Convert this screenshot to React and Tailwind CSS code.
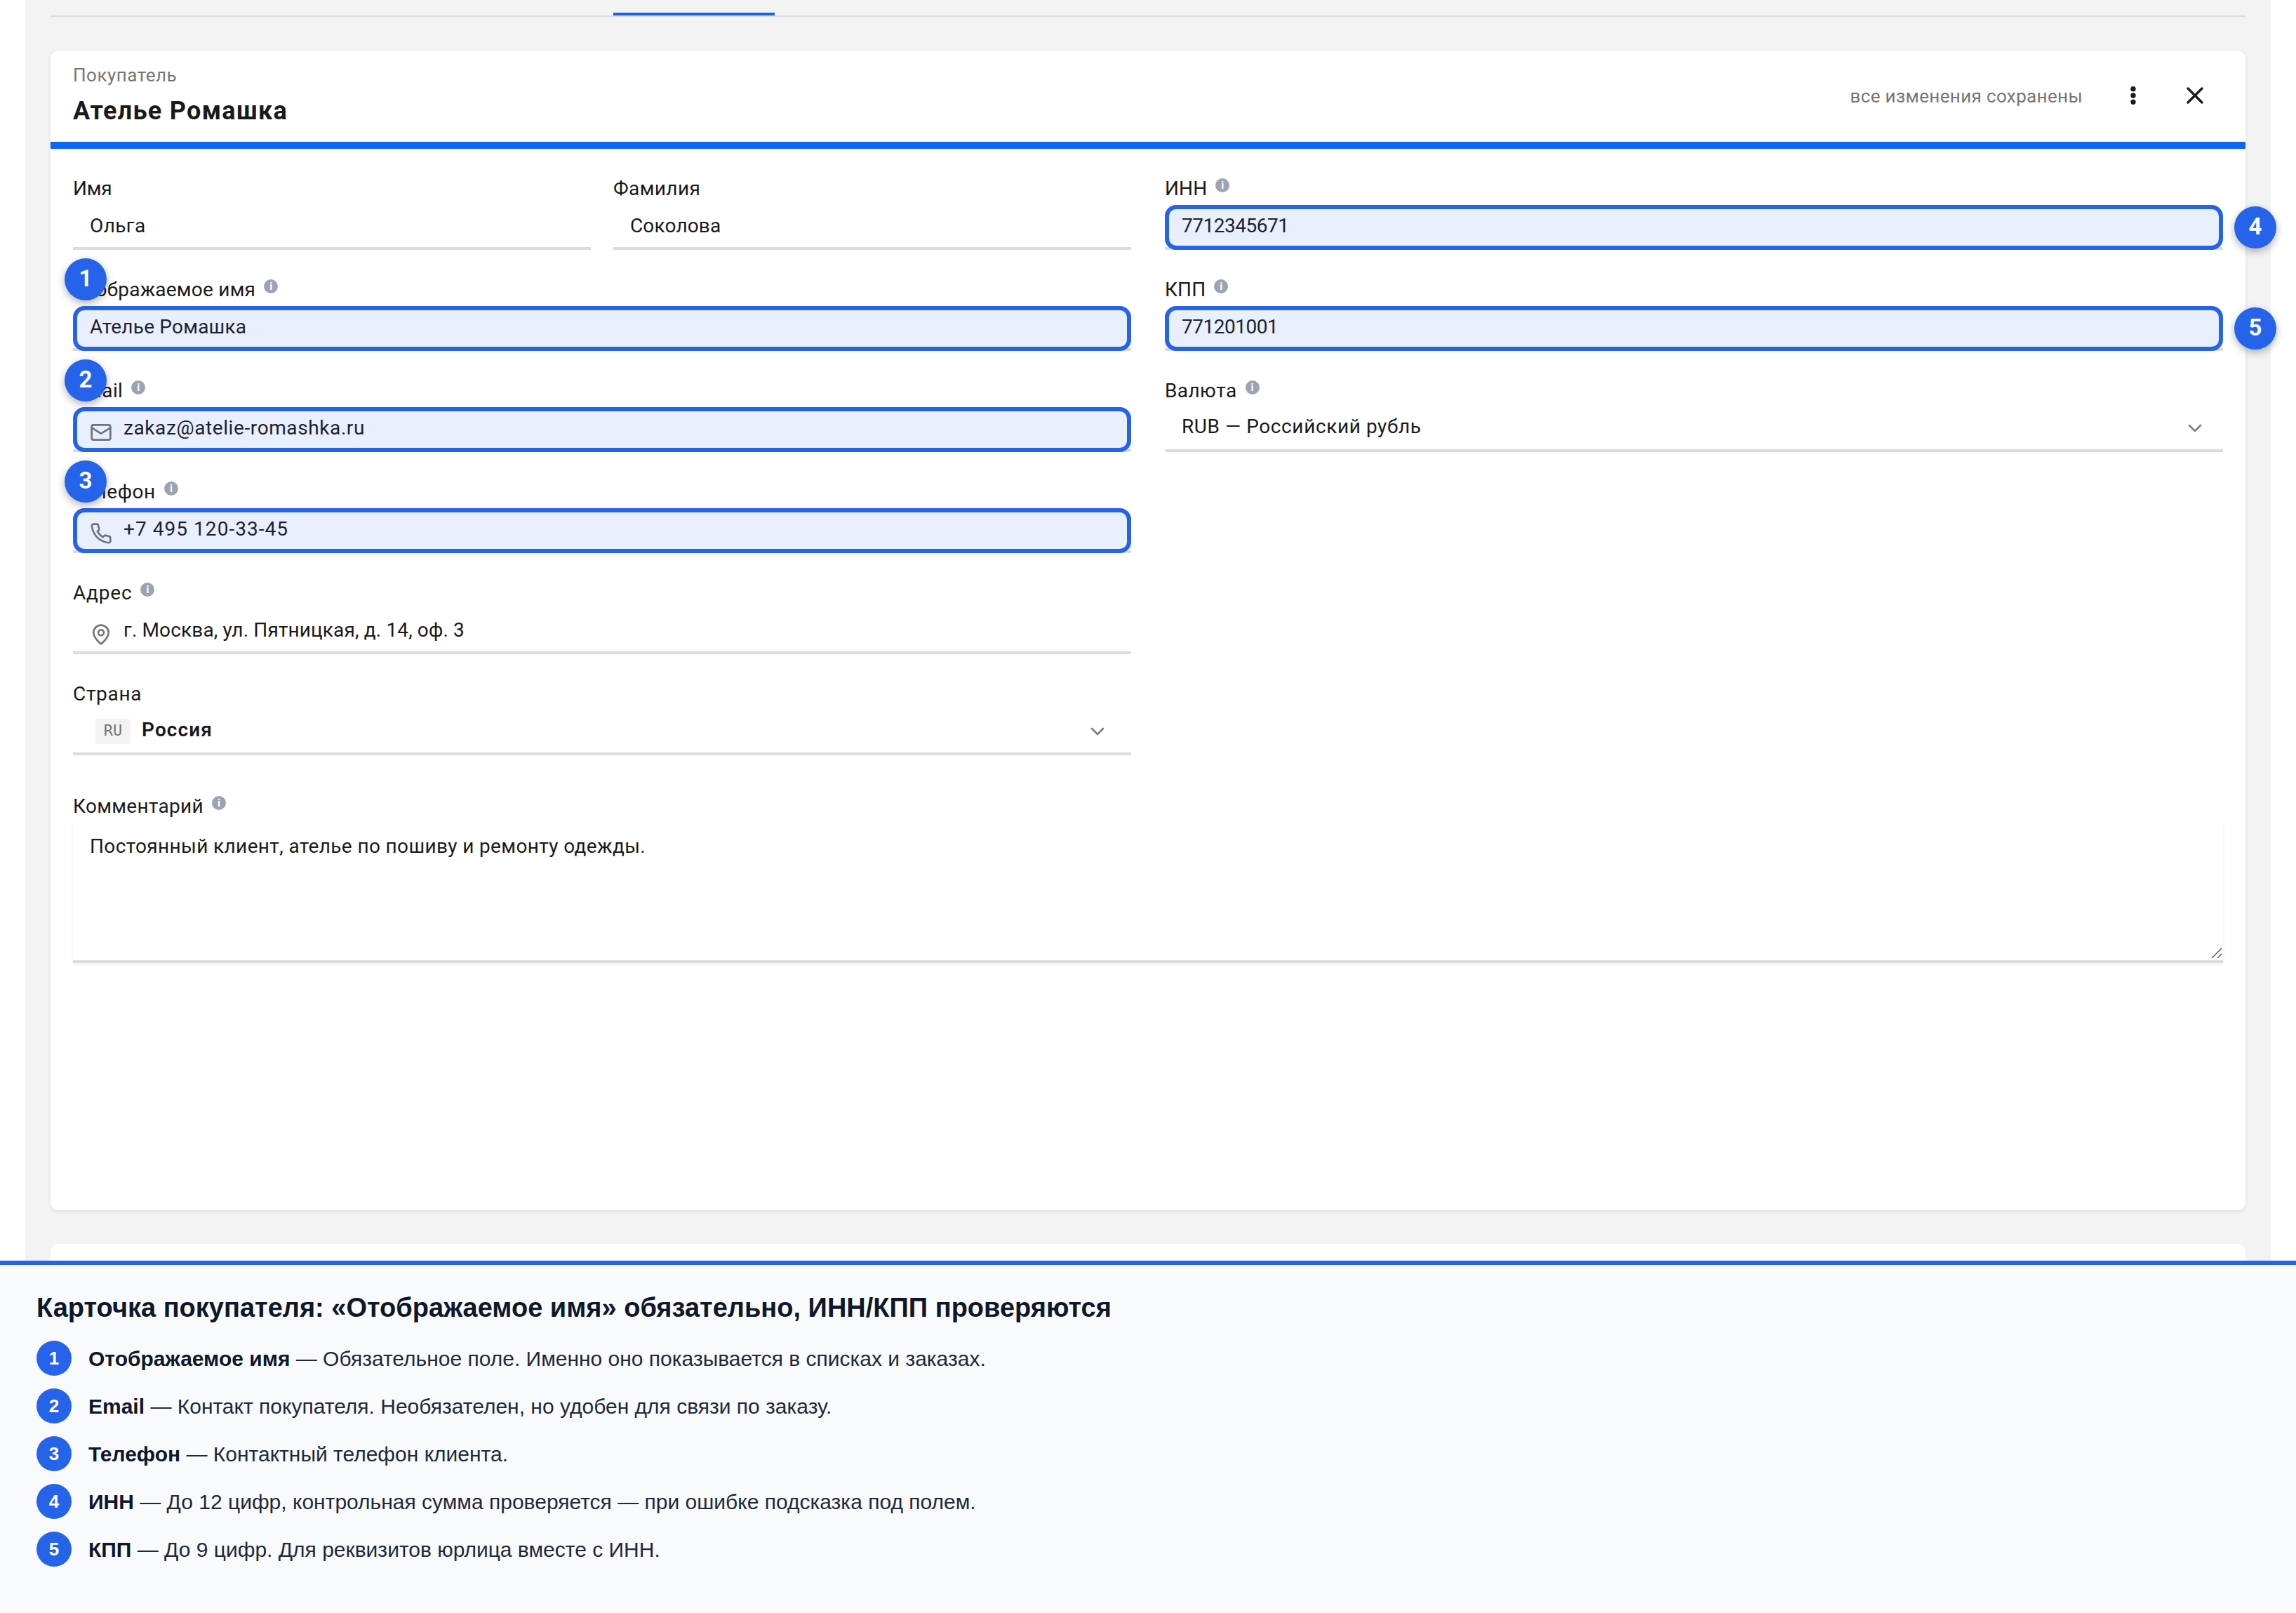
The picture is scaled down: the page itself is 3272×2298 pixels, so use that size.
import React from "react"
import { ChevronDown } from "lucide-react"

const notes = [
    { title: "Отображаемое имя", text: "Обязательное поле. Именно оно показывается в списках и заказах." },
    { title: "Email", text: "Контакт покупателя. Необязателен, но удобен для связи по заказу." },
    { title: "Телефон", text: "Контактный телефон клиента." },
    { title: "ИНН", text: "До 12 цифр, контрольная сумма проверяется — при ошибке подсказка под полем." },
    { title: "КПП", text: "До 9 цифр. Для реквизитов юрлица вместе с ИНН." },
]

const Icon = ({ children, className = "" }) => (
    <svg viewBox="0 0 24 24" fill="none" stroke="currentColor" strokeWidth="2" strokeLinecap="round"
        strokeLinejoin="round" className={`w-8 h-8 shrink-0 ${className}`}>{children}</svg>
)

const MailIcon = () => (
    <Icon>
        <rect x="2" y="4" width="20" height="16" rx="2" />
        <path d="m22 7-8.97 5.7a1.94 1.94 0 0 1-2.06 0L2 7" />
    </Icon>
)

const PhoneIcon = () => (
    <Icon>
        <path d="M22 16.92v3a2 2 0 0 1-2.18 2 19.79 19.79 0 0 1-8.63-3.07 19.5 19.5 0 0 1-6-6 19.79 19.79 0 0 1-3.07-8.67A2 2 0 0 1 4.11 2h3a2 2 0 0 1 2 1.72 12.84 12.84 0 0 0 .7 2.81 2 2 0 0 1-.45 2.11L8.09 9.91a16 16 0 0 0 6 6l1.27-1.27a2 2 0 0 1 2.11-.45 12.84 12.84 0 0 0 2.81.7A2 2 0 0 1 22 16.92z" />
    </Icon>
)

const PinIcon = () => (
    <Icon>
        <path d="M20 10c0 6-8 12-8 12s-8-6-8-12a8 8 0 0 1 16 0Z" />
        <circle cx="12" cy="10" r="3" />
    </Icon>
)

const Label = ({ text, info, className = "" }) => (
    <div className="h-[34px] mb-[6px] flex items-start whitespace-nowrap">
        <span className={`leading-[34px] ${className}`}>{text}</span>
        {info && (
            <span className="ml-3 mt-[2px] w-5 h-5 rounded-full bg-[#9ca3b3] text-white text-[15px] leading-[21px] font-bold text-center tracking-normal">i</span>
        )}
    </div>
)

// numbered marker that hangs over the corner or the side of a field
const Marker = ({ n, side }) => (
    <span className={`absolute z-10 w-[60px] h-[60px] rounded-full bg-[#2563eb] text-white text-[33px] leading-[58px] font-bold text-center tracking-normal shadow-[0_4px_12px_rgba(0,0,0,0.3)] ${side ? "left-full ml-4 top-[2px]" : "-left-3 -top-[68px]"}`}>{n}</span>
)

const Field = ({ label, labelClass, info, value, valueClass = "", icon, marker, side, select, children }) => (
    <div className="flex-1 h-[104px] mb-10">
        <Label text={label} info={info} className={labelClass} />
        <div className="relative h-16 border-b-4 border-[#dcdcdc] px-6 flex items-start whitespace-nowrap">
            {icon && <span className="mt-5 mr-4 text-[#757575]">{icon}</span>}
            {children || <span className={`grow ${select ? "leading-[56px]" : "leading-[60px]"} ${valueClass}`}>{value}</span>}
            {select && <ChevronDown size={32} className="mt-[14px] text-[#808080]" />}
            {children && <span className="w-2" />}
            {marker && <div className="absolute inset-x-0 top-0 -bottom-1 rounded-2xl border-[6px] border-[#2563eb] bg-[#2563eb]/10" />}
            {marker && <Marker n={marker} side={side} />}
        </div>
    </div>
)

const BuyerCard = () => (
    <div className="h-[1652px] bg-white rounded-xl shadow-[0_2px_6px_rgba(0,0,0,0.08)]">
        <div className="h-[140px] border-b-[10px] border-[#0c66f4] px-8 flex justify-between">
            <div>
                <div className="mt-[19px] text-[26px] leading-8 text-[#757575] tracking-[0.5px]">Покупатель</div>
                <div className="mt-[13px] text-[36px] leading-[44px] font-bold tracking-[1.3px]">Ателье Ромашка</div>
            </div>
            <div className="h-[130px] flex items-center pr-5">
                <span className="text-[26px] text-[#757575] tracking-[0.36px]">все изменения сохранены</span>
                <Icon className="ml-14 -mt-[2px]">
                    <circle cx="12" cy="5" r="1.5" strokeWidth="2.5" />
                    <circle cx="12" cy="12" r="1.5" strokeWidth="2.5" />
                    <circle cx="12" cy="19" r="1.5" strokeWidth="2.5" />
                </Icon>
                <svg viewBox="0 0 24 24" fill="none" stroke="currentColor" strokeWidth="2" strokeLinecap="round" className="w-10 h-10 ml-[52px] -mt-[2px]">
                    <path d="M18 6 6 18M6 6l12 12" />
                </svg>
            </div>
        </div>

        <div className="px-8 pt-10">
            <div className="flex gap-12">
                <div className="flex-1">
                    <div className="flex gap-8">
                        <Field label="Имя" labelClass="tracking-[-0.2px]" value="Ольга" />
                        <Field label="Фамилия" value="Соколова" valueClass="tracking-[0.15px]" />
                    </div>
                    <Field label="Отображаемое имя" labelClass="tracking-[0.22px]" info value="Ателье Ромашка" valueClass="tracking-[0.2px]" marker={1} />
                    <Field label="Email" info value="zakaz@atelie-romashka.ru" valueClass="tracking-[0.6px]" icon={<MailIcon />} marker={2} />
                    <Field label="Телефон" labelClass="tracking-[0.6px]" info value="+7 495 120-33-45" valueClass="tracking-[1.05px]" icon={<PhoneIcon />} marker={3} />
                    <Field label="Адрес" labelClass="tracking-[0.8px]" info value="г. Москва, ул. Пятницкая, д. 14, оф. 3" valueClass="tracking-[0.14px]" icon={<PinIcon />} />
                    <Field label="Страна" labelClass="tracking-[0.7px]" select>
                        <span className="ml-2 mt-3 w-[50px] h-9 rounded bg-[#f3f3f3] text-[#757575] text-[22px] leading-[34px] text-center tracking-normal font-['DejaVu_Sans_Mono',monospace]">RU</span>
                        <span className="ml-4 grow leading-[56px] font-semibold tracking-[1.1px]">Россия</span>
                    </Field>
                </div>
                <div className="flex-1">
                    <Field label="ИНН" labelClass="tracking-[0.1px]" info value="7712345671" valueClass="tracking-[-0.5px]" marker={4} side />
                    <Field label="КПП" labelClass="tracking-[0.1px]" info value="771201001" valueClass="tracking-[-0.5px]" marker={5} side />
                    <Field label="Валюта" info value="RUB — Российский рубль" valueClass="tracking-[0.6px]" select />
                </div>
            </div>

            <div className="pt-4">
                <Label text="Комментарий" info className="tracking-[0.3px]" />
                <div className="h-[200px] border-b-4 border-[#dcdcdc] px-6 pt-[17px] leading-[34px] flex justify-between shadow-[0_2px_6px_rgba(0,0,0,0.06)]">
                    <span className="tracking-[0.37px]">Постоянный клиент, ателье по пошиву и ремонту одежды.</span>
                    <svg viewBox="0 0 16 16" stroke="#555" strokeWidth="1.4" className="w-4 h-4 self-end mb-[2px] -mr-[23px]">
                        <path d="M1 15 15 1M9 15l6-6" />
                    </svg>
                </div>
            </div>
        </div>
    </div>
)

const App = () => {
    return (
        <div className="w-[3272px] h-[2298px] overflow-hidden bg-white flex flex-col text-[#1a1a1a]">
            <div className="h-[1796px] shrink-0 mx-9 px-9 bg-[#f3f3f3] text-[28px] tracking-[0.4px] font-[Roboto,sans-serif]">
                <div className="h-6 pt-[18px] border-b-2 border-[#dcdcdc] mb-12">
                    <div className="ml-[802px] w-[230px] h-1 bg-[#0c66f4]" />
                </div>
                <BuyerCard />
                <div className="mt-12 h-6 bg-white rounded-t-xl" />
            </div>

            <div className="grow border-t-[6px] border-[#2563eb] bg-[#f8fafc] px-[52px] pt-[38px] font-['Liberation_Sans',Arial,sans-serif]">
                <h2 className="text-[38px] leading-[46px] font-bold text-[#0f172a]">Карточка покупателя: «Отображаемое имя» обязательно, ИНН/КПП проверяются</h2>
                <ol className="mt-6 flex flex-col gap-[18px]">
                    {notes.map((note, i) => (
                        <li key={note.title} className="h-[50px] flex items-center gap-6">
                            <span className="w-[50px] h-[50px] rounded-full bg-[#2563eb] text-white text-[26px] leading-[50px] font-bold text-center">{i + 1}</span>
                            <span className="text-[30px] text-[#1e293b]"><b className="text-[#0f172a]">{note.title}</b> — {note.text}</span>
                        </li>
                    ))}
                </ol>
            </div>
        </div>
    )
}

export default App
